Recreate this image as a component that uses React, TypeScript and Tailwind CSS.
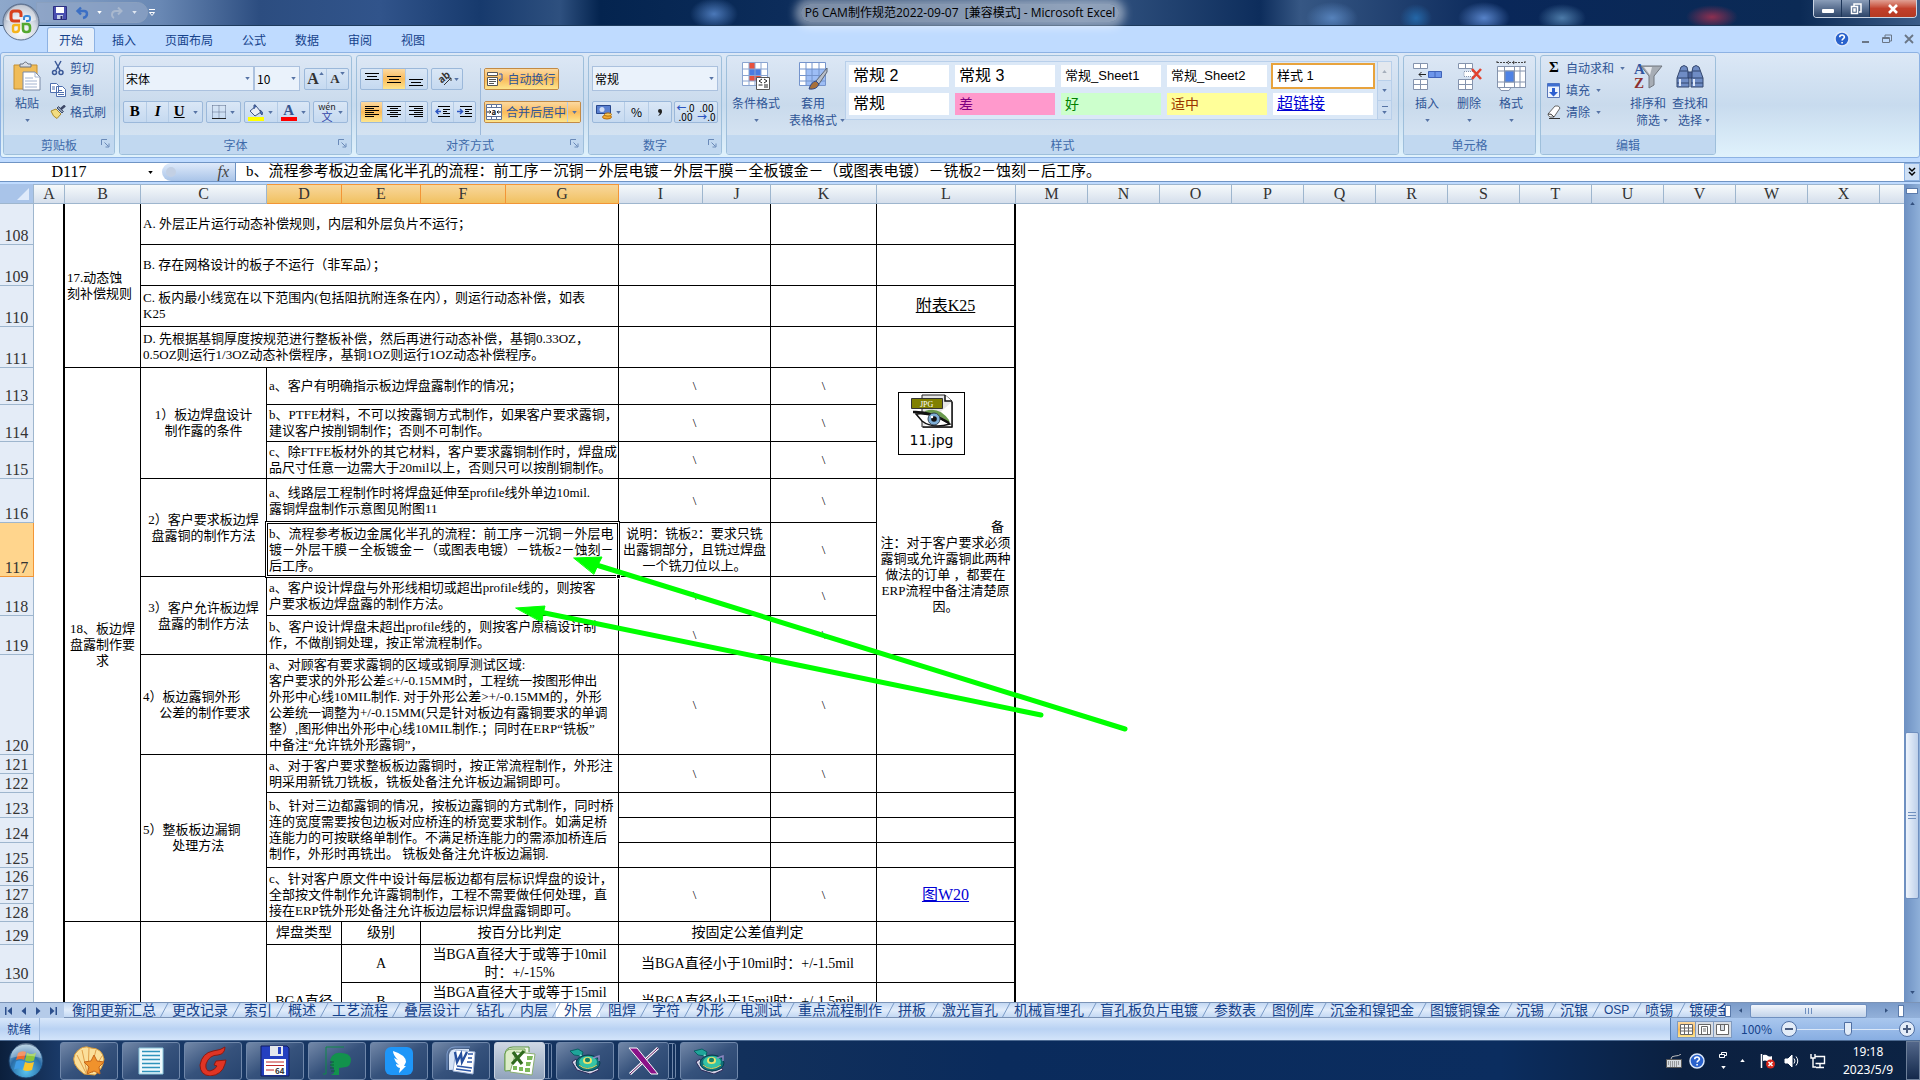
import React from "react";
import { clsx } from "clsx";

const sheetTabs = [
  "衡阳更新汇总", "更改记录", "索引", "概述", "工艺流程", "叠层设计", "钻孔", "内层", "外层",
  "阻焊", "字符", "外形", "电测试", "重点流程制作", "拼板", "激光盲孔", "机械盲埋孔",
  "盲孔板负片电镀", "参数表", "图例库", "沉金和镍钯金", "图镀铜镍金", "沉锡", "沉银", "OSP",
  "喷锡", "镀硬金",
];

const columns = [
  { name: "A", width: "w-[31px]" },
  { name: "B", width: "w-[76px]" },
  { name: "C", width: "w-[126px]" },
  { name: "D", width: "w-[75px]", active: true },
  { name: "E", width: "w-[79px]", active: true },
  { name: "F", width: "w-[85px]", active: true },
  { name: "G", width: "w-[113px]", active: true },
  { name: "I", width: "w-[84px]" },
  { name: "J", width: "w-[68px]" },
  { name: "K", width: "w-[106px]" },
  { name: "L", width: "w-[139px]" },
  ..."MNOPQRSTUVWX".split("").map((name) => ({ name, width: "w-[72px]", active: false })),
];

/* ---------- small parts ---------- */

const Caret = ({ className }: { className?: string }) => (
  <svg viewBox="0 0 6 4" className={clsx("h-[3px] w-[5px] shrink-0 fill-[#5673a5]", className)}>
    <path d="M0 0h6L3 4z" />
  </svg>
);

const Group = ({
  title,
  className,
  launcher = true,
  children,
}: {
  title: string;
  className?: string;
  launcher?: boolean;
  children: React.ReactNode;
}) => (
  <section
    className={clsx(
      "flex h-[100px] shrink-0 flex-col overflow-hidden rounded-[3px] border border-[#9ebfdb] bg-gradient-to-b from-[#dce7f5] via-[#c9daec] to-[#dbe8f5]",
      className
    )}
  >
    <div className="flex flex-1">{children}</div>
    <div className="relative flex h-[19px] items-center justify-center bg-[#c1d8f0] text-[#3e6aaa]">
      {title}
      {launcher && (
        <svg viewBox="0 0 9 9" className="absolute top-1 right-1 size-[9px] fill-none stroke-[#6a8ab8]">
          <path d="M.5 6V.5H6M3.5 3.5l4 4M8 4.5V8H4.5" />
        </svg>
      )}
    </div>
  </section>
);

const ButtonBox = ({ className, children }: { className?: string; children: React.ReactNode }) => (
  <div
    className={clsx(
      "flex h-[22px] items-stretch divide-x divide-[#b5cce6] overflow-hidden rounded-[2px] border border-[#9bb8da] bg-gradient-to-b from-[#dae7f6] to-[#c5d9f0]",
      className
    )}
  >
    {children}
  </div>
);

const Tool = ({
  label,
  className,
  on,
  children,
}: {
  label: string;
  className?: string;
  on?: boolean;
  children: React.ReactNode;
}) => (
  <button
    aria-label={label}
    className={clsx(
      "flex flex-1 items-center justify-center gap-1",
      on && "bg-gradient-to-b from-[#fcd9a0] via-[#f9bb5a] to-[#fde58c]",
      className
    )}
  >
    {children}
  </button>
);

const Lines = ({ d }: { d: string }) => (
  <svg viewBox="0 0 16 16" className="size-4 fill-none stroke-black" shapeRendering="crispEdges">
    <path d={d} />
  </svg>
);

const Combo = ({ label, value, className }: { label: string; value: string; className?: string }) => (
  <div className={clsx("relative h-[25px]", className)}>
    <select
      aria-label={label}
      className="h-full w-full appearance-none border border-[#abc1de] bg-[#eaf2fb] pl-0.5 text-xs text-black"
    >
      <option>{value}</option>
    </select>
    <Caret className="absolute top-[11px] right-1" />
  </div>
);

const BigButton = ({ lines, className, children }: { lines: string[]; className?: string; children: React.ReactNode }) => (
  <button className={clsx("flex flex-col items-center pt-1", className)}>
    <span className="mb-0.5 flex h-8 items-center">{children}</span>
    {lines.map((line, i) => (
      <span key={line} className="relative mt-px h-4 leading-4">
        {line}
        {lines.length > 1 && i === 1 && <Caret className="absolute top-[7px] -right-2" />}
      </span>
    ))}
    {lines.length === 1 && <Caret className="mt-2" />}
  </button>
);

const SmallButton = ({ label, caret, icon }: { label: string; caret?: boolean; icon: React.ReactNode }) => (
  <button className="flex h-[22px] items-center gap-1">
    <span className="flex w-4 justify-center">{icon}</span>
    {label}
    {caret && <Caret className="ml-0.5" />}
  </button>
);

/* ---------- title and ribbon ---------- */

const OfficeOrb = () => (
  <svg viewBox="0 0 38 38" className="absolute top-[3px] left-[2px] z-10 size-[38px]">
    <defs>
      <radialGradient id="orb" cx="50%" cy="75%" r="70%">
        <stop offset="0" stopColor="#fff" />
        <stop offset=".6" stopColor="#d3d9e3" />
        <stop offset="1" stopColor="#8391a8" />
      </radialGradient>
    </defs>
    <circle cx="19" cy="19" r="18" fill="url(#orb)" stroke="#5a6e8c" />
    <path d="M4 17a15 15 0 0 1 30 0Q19 22 4 17z" fill="#fff" opacity=".5" />
    <g fill="none">
      <path d="M18 18h-6q-3 0-3-3v-4q0-3 3-3h4q3 0 3 3v3" stroke="#d8401c" strokeWidth="3" />
      <path d="M22 17v-2q0-2 2-2h2q2 0 2 2v1q0 2-2 2h-2" stroke="#3a8bd8" strokeWidth="2" />
      <path d="M17 22v4q0 3-3 3h-1q-2 0-2-2v-3q0-2 2-2z" stroke="#f5b41c" strokeWidth="2.4" />
      <path d="M21 21h4q3 0 3 3v2q0 3-3 3h-1q-3 0-3-3z" stroke="#54a82e" strokeWidth="2.6" />
    </g>
  </svg>
);

const TitleBar = () => (
  <header className="relative flex h-[26px] shrink-0 items-start justify-between border-b border-[#1d3a5c] bg-[radial-gradient(ellipse_24px_16px_at_714px_14px,#4b78b8,transparent),radial-gradient(ellipse_26px_16px_at_1332px_18px,#5682bb,transparent),radial-gradient(ellipse_16px_14px_at_1416px_18px,#2467a8,transparent),radial-gradient(ellipse_26px_16px_at_1484px_18px,#5682c8,transparent),radial-gradient(ellipse_24px_14px_at_1562px_18px,#4c7aa8,transparent),radial-gradient(ellipse_26px_12px_at_1712px_17px,#8d2f50,transparent),linear-gradient(90deg,#8ea8cb_0,#6988b4_160px,#2c4d80_260px,#31548b_380px,#173a6d_480px,#2e507f_560px,#04244f_600px,#0c2c5a_780px,#365784_1080px,#0d2d5c_1260px,#365784_1300px,#092759_1500px,#0b2a55_1800px,#3b5c88)]">
    <div className="mt-0.5 ml-9 flex h-[21px] items-center rounded-r-full border border-[#8aa0bf] bg-[#94a9c8]/60 pr-2.5 pl-4">
      <button aria-label="保存">
        <svg viewBox="0 0 14 14" className="size-3.5">
          <path d="M.5.5h13v13h-13z" fill="#4a4fb0" stroke="#2c2f80" />
          <path d="M3 1h8v6H3z" fill="#fff" />
          <path d="M4 9h6v4H4z" fill="#c5d0e8" />
          <path d="M7.5 10h2v3h-2z" fill="#22246a" />
        </svg>
      </button>
      <button aria-label="撤消" className="ml-2 flex items-center gap-2">
        <svg viewBox="0 0 14 14" className="size-3.5 fill-none stroke-[#3c6fc4]" strokeWidth="2.4">
          <path d="M3 5h6q3 0 3 3 0 3-4 4M6 1.5L2.5 5 6 8.5" />
        </svg>
        <Caret className="fill-white" />
      </button>
      <button aria-label="恢复" className="ml-2 flex items-center gap-2">
        <svg viewBox="0 0 14 14" className="size-3.5 fill-none stroke-[#a9b8ce]" strokeWidth="2">
          <path d="M11 5H6Q2 5 2 9q0 2 2 3M8 1.5L11.5 5 8 8.5" />
        </svg>
        <Caret className="fill-[#dfe6f0]" />
      </button>
    </div>
    <svg viewBox="0 0 8 8" className="absolute top-[9px] left-[148px] size-2 fill-none stroke-white">
      <path d="M1 .5h6M1.500 3.500h5L4 6.500z" />
    </svg>
    <h1 className="absolute inset-x-0 top-1 mx-auto w-fit rounded-full bg-white/45 px-1 font-['Open_Sans','Noto_Sans_CJK_SC',sans-serif] text-xs leading-[18px] whitespace-pre text-black shadow-[0_0_8px_6px_rgba(255,255,255,0.45)]">
      {"P6 CAM制作规范2022-09-07  [兼容模式] - Microsoft Excel"}
    </h1>
    <div className="mr-[3px] flex h-[18px] divide-x divide-[#1d3558] overflow-hidden rounded-b-[4px] border border-t-0 border-[#c9d4e4]">
      <button aria-label="最小化" className="flex w-7 items-center justify-center bg-gradient-to-b from-[#8a9db9] to-[#2c4468]">
        <span className="mt-1 h-1 w-3 rounded-[1px] bg-white" />
      </button>
      <button aria-label="还原" className="flex w-7 items-center justify-center bg-gradient-to-b from-[#8a9db9] to-[#2c4468]">
        <svg viewBox="0 0 12 12" className="size-3 fill-none stroke-white" strokeWidth="1.5">
          <path d="M4 3V1h7v8H9M1.500 3.500h6v7h-6zM4 6h1v2H4z" />
        </svg>
      </button>
      <button aria-label="关闭" className="flex w-[46px] items-center justify-center bg-gradient-to-b from-[#e0a094] via-[#c2402c] to-[#b53a22]">
        <svg viewBox="0 0 12 10" className="h-2.5 w-3 fill-none stroke-white" strokeWidth="2.6">
          <path d="M2 1l8 8M10 1L2 9" />
        </svg>
      </button>
    </div>
  </header>
);

const HelpIcon = ({ className }: { className?: string }) => (
  <svg viewBox="0 0 16 16" className={className}>
    <circle cx="8" cy="8" r="7" fill="#2a62cc" stroke="#dce8fa" strokeWidth="1.5" />
    <path d="M5.700 6.300c0-3 4.800-3 4.700-.2C10.300 7.700 8.100 7.600 8.100 9.600M8.100 11v1.600" fill="none" stroke="#fff" strokeWidth="1.6" />
  </svg>
);

const RibbonTabs = () => (
  <nav className="flex h-[26px] shrink-0 items-end bg-[#bfdbff] pl-[47px] text-[#15428b]">
    <div className="flex flex-1 items-end gap-[5px]">
      {["开始", "插入", "页面布局", "公式", "数据", "审阅", "视图"].map((tab, i) => (
        <button
          key={tab}
          className={clsx(
            "h-[25px] px-3 text-xs",
            i === 0 && "rounded-t-[3px] border border-b-0 border-[#8db2e3] bg-[#e6effa] px-[11px]"
          )}
        >
          {tab}
        </button>
      ))}
    </div>
    <div className="flex h-full items-center gap-3 pr-1.5">
      <button aria-label="帮助"><HelpIcon className="size-4" /></button>
      <button aria-label="最小化窗口">
        <svg viewBox="0 0 8 10" className="h-2.5 w-2 stroke-[#6a7686]" strokeWidth="2">
          <path d="M0 8h7" />
        </svg>
      </button>
      <button aria-label="还原窗口">
        <svg viewBox="0 0 10 10" className="size-2.5 fill-none stroke-[#6a7686]">
          <path d="M3 3V1h6.500v6H8M.5 3.500H7.500v5H.5zM.5 4.500h7" />
        </svg>
      </button>
      <button aria-label="关闭窗口">
        <svg viewBox="0 0 10 10" className="size-2.5 fill-none stroke-[#6a7686]" strokeWidth="1.8">
          <path d="M1 1l8 8M9 1L1 9" />
        </svg>
      </button>
    </div>
  </nav>
);

const ClipboardGroup = () => (
  <Group title="剪贴板" className="w-[112px]">
    <BigButton lines={["粘贴"]} className="w-[46px]">
      <svg viewBox="0 0 28 30" className="h-[30px] w-7">
        <path d="M1 4h23v24H1z" fill="#f0bc58" stroke="#c58f30" />
        <path d="M7 6V3h3q2.500-4 5 0h3v3z" fill="#d9dde4" stroke="#6b7280" />
        <path d="M10 11h12l5 5v13H10z" fill="#fff" stroke="#7a8aa5" />
        <path d="M22 11v5h5M12 17h8M12 20h12M12 23h12M12 26h12" fill="none" stroke="#a3b4d0" />
      </svg>
    </BigButton>
    <div className="flex flex-col pt-px">
      <SmallButton
        label="剪切"
        icon={
          <svg viewBox="0 0 14 16" className="h-4 w-3.5 fill-none stroke-[#3b5998]" strokeWidth="1.5">
            <path d="M4 1l5 9M10 1L5 10" />
            <circle cx="3.5" cy="12.5" r="2" />
            <circle cx="10" cy="12.5" r="2" />
          </svg>
        }
      />
      <SmallButton
        label="复制"
        icon={
          <svg viewBox="0 0 16 14" className="h-3.5 w-4" fill="#fff" stroke="#4f6fae">
            <path d="M.5.5h6l2 2v7h-8zM6.500 3.500h6l3 3v7h-9z" />
            <path d="M2 4h3M2 6h3M8 7.500h4M8 9.500h6M8 11.500h6" />
          </svg>
        }
      />
      <SmallButton
        label="格式刷"
        icon={
          <svg viewBox="0 0 16 14" className="h-3.5 w-4">
            <path d="M1 6l5-2 5 5-4 4.500Q3 12 1 6z" fill="#f3dc80" stroke="#a88a30" />
            <path d="M7 3l5 5 1.500-1.500-5-5z" fill="#8d9bb4" stroke="#42506c" />
            <path d="M11 4l4-3.500" stroke="#3c4766" strokeWidth="2.5" />
          </svg>
        }
      />
    </div>
  </Group>
);

const FontGroup = () => (
  <Group title="字体" className="w-[233px]">
    <div className="flex flex-1 flex-col gap-2.5 px-[3px] pt-2.5">
      <div className="flex items-center">
        <Combo label="字体" value="宋体" className="w-[131px]" />
        <Combo label="字号" value="10" className="w-[46px]" />
        <ButtonBox className="ml-1 w-[45px]">
          <Tool label="增大字号"><b className="font-['Liberation_Serif',serif] text-base text-[#333]">A</b><Caret className="-ml-1 mb-2.5 rotate-180" /></Tool>
          <Tool label="减小字号"><b className="font-['Liberation_Serif',serif] text-[13px] text-[#333]">A</b><Caret className="-ml-1 mb-2.5" /></Tool>
        </ButtonBox>
      </div>
      <div className="flex gap-[3px] font-['Liberation_Serif',serif] text-black">
        <ButtonBox className="w-20">
          <Tool label="加粗"><b className="text-[15px]">B</b></Tool>
          <Tool label="倾斜"><b className="text-[15px] italic">I</b></Tool>
          <Tool label="下划线" className="flex-[1.5]"><b className="text-[15px] underline">U</b><Caret className="ml-1" /></Tool>
        </ButtonBox>
        <ButtonBox className="w-[35px]">
          <Tool label="边框">
            <svg viewBox="0 0 14 14" className="size-3.5 fill-none stroke-[#5b6b88]">
              <path d="M.5.5h13M.5.5v13M13.500.5v13M7 .5v13M.5 7h13" strokeDasharray="1 1" />
              <path d="M0 13.500h14" stroke="#222" />
            </svg>
            <Caret />
          </Tool>
        </ButtonBox>
        <ButtonBox className="w-[66px]">
          <Tool label="填充颜色">
            <svg viewBox="0 0 16 17" className="h-[17px] w-4">
              <path d="M2 7l6-5 5 6-6 4z" fill="#e9eef7" stroke="#3f5584" />
              <path d="M12 6q4 2 2 5-2-1-2-5zM6 5V1q2-1 2 2" fill="#4a74c4" stroke="#3f5584" />
              <path d="M0 13h16v4H0z" fill="#ff0" />
            </svg>
            <Caret />
          </Tool>
          <Tool label="字体颜色">
            <span className="flex flex-col items-center">
              <b className="text-[15px] leading-[13px] text-[#36558f]">A</b>
              <span className="h-1 w-4 bg-[#f00]" />
            </span>
            <Caret />
          </Tool>
        </ButtonBox>
        <ButtonBox className="w-[35px]">
          <Tool label="拼音指南">
            <span className="flex flex-col items-center font-['Noto_Sans_CJK_SC',sans-serif]">
              <span className="text-[9px] leading-[8px] text-[#222]">wén</span>
              <span className="text-[11px] leading-[11px] text-[#3346a8]">文</span>
            </span>
            <Caret className="-ml-0.5" />
          </Tool>
        </ButtonBox>
      </div>
    </div>
  </Group>
);

const AlignGroup = () => (
  <Group title="对齐方式" className="w-[228px]">
    <div className="flex flex-1 pt-3 pl-[3px]">
      <div className="flex flex-col gap-[11px] border-r border-[#9bb8da] pr-1">
        <div className="flex gap-[3px]">
          <ButtonBox className="w-[68px]">
            <Tool label="顶端对齐"><Lines d="M1 2.500h14M3 5.500h10M1 8.500h14" /></Tool>
            <Tool label="垂直居中" on><Lines d="M1 5.500h14M3 8.500h10M1 11.500h14" /></Tool>
            <Tool label="底端对齐"><Lines d="M1 8.500h14M3 11.500h10M1 14.500h14" /></Tool>
          </ButtonBox>
          <ButtonBox className="w-8">
            <Tool label="方向">
              <svg viewBox="0 0 18 18" className="size-[18px] overflow-visible fill-none stroke-[#333]">
                <text x="3" y="11" fontSize="10" fontWeight="bold" fill="#333" stroke="none" transform="rotate(-40 8 9)">ab</text>
                <path d="M8 15L15 8M15 11V8h-3" />
              </svg>
              <Caret className="-ml-1" />
            </Tool>
          </ButtonBox>
        </div>
        <div className="flex gap-[3px]">
          <ButtonBox className="w-[68px]">
            <Tool label="文本左对齐" on><Lines d="M1 2.500h14M1 4.500h9M1 6.500h14M1 8.500h9M1 10.500h14M1 12.500h9" /></Tool>
            <Tool label="居中"><Lines d="M1 2.500h14M4 4.500h8M1 6.500h14M4 8.500h8M1 10.500h14M4 12.500h8" /></Tool>
            <Tool label="文本右对齐"><Lines d="M1 2.500h14M6 4.500h9M1 6.500h14M6 8.500h9M1 10.500h14M6 12.500h9" /></Tool>
          </ButtonBox>
          <ButtonBox className="w-[45px]">
            <Tool label="减少缩进量">
              <svg viewBox="0 0 16 14" className="h-3.5 w-4 fill-none stroke-black">
                <path d="M3 1.500h12M8 4.500h7M8 6.500h4M8 8.500h7M3 11.500h12" />
                <path d="M6 6.500H1M3.500 4L1 6.500 3.500 9" stroke="#2c55c0" strokeWidth="1.5" />
              </svg>
            </Tool>
            <Tool label="增加缩进量">
              <svg viewBox="0 0 16 14" className="h-3.5 w-4 fill-none stroke-black">
                <path d="M3 1.500h12M8 4.500h7M8 6.500h4M8 8.500h7M3 11.500h12" />
                <path d="M0 6.500h5M3 4l2.500 2.500L3 9" stroke="#2c55c0" strokeWidth="1.5" />
              </svg>
            </Tool>
          </ButtonBox>
        </div>
      </div>
      <div className="flex flex-col gap-[11px] pl-[3px]">
        <ButtonBox className="w-[75px] border-[#c28a45]">
          <Tool label="自动换行" on>
            <svg viewBox="0 0 16 16" className="size-4" fill="#fff" stroke="#555">
              <path d="M.5 1.500h10v3H.5zM.5 6.500h10v8H.5zM2 8.500h7M2 10.500h7M2 12.500h5" />
              <path d="M12 3h3v6h-3M13.500 7.500L12 9l1.500 1.500" fill="none" stroke="#3658b0" />
            </svg>
            自动换行
          </Tool>
        </ButtonBox>
        <ButtonBox className="w-[97px] border-[#c28a45]">
          <Tool label="合并后居中" on className="flex-[7]">
            <svg viewBox="0 0 16 16" className="size-4" fill="#fff" stroke="#5f7299">
              <path d="M.5.5h5v3h-5zM5.500.5h5v3h-5zM10.500.5h5v3h-5zM.5 12.500h5v3h-5zM5.500 12.500h5v3h-5zM10.500 12.500h5v3h-5zM.5 3.500h15v9H.5z" />
              <path d="M1 8h4M3.500 6.500L5 8 3.500 9.500M15 8h-4M12.500 6.500L11 8l1.500 1.500" stroke="#222" />
              <text x="5.5" y="10.5" fontSize="8" fontWeight="bold" fill="#222" stroke="none">a</text>
            </svg>
            合并后居中
          </Tool>
          <Tool label="合并选项" on><Caret /></Tool>
        </ButtonBox>
      </div>
    </div>
  </Group>
);

const NumberGroup = () => (
  <Group title="数字" className="w-[134px]">
    <div className="flex flex-1 flex-col gap-2.5 px-[3px] pt-2.5">
      <Combo label="数字格式" value="常规" className="w-full" />
      <div className="flex justify-between text-black">
        <ButtonBox className="w-20">
          <Tool label="会计数字格式" className="flex-[1.4]">
            <svg viewBox="0 0 16 16" className="size-4">
              <path d="M.5 1.500h14v8H.5z" fill="#5a80d0" stroke="#28478c" />
              <circle cx="6" cy="5.5" r="2.5" fill="#cfdcf5" />
              <ellipse cx="11" cy="13" rx="4.5" ry="2" fill="#f0a830" stroke="#b06c10" />
              <ellipse cx="12" cy="10.5" rx="3.5" ry="1.6" fill="#f8cc58" stroke="#b06c10" />
            </svg>
            <Caret />
          </Tool>
          <Tool label="百分比样式">%</Tool>
          <Tool label="千位分隔样式">
            <svg viewBox="0 0 6 10" className="h-2.5 w-1.5 fill-[#222]">
              <circle cx="3" cy="4" r="2" />
              <path d="M5 4q0 4-4 5 2-2 2-4z" />
            </svg>
          </Tool>
        </ButtonBox>
        <ButtonBox className="w-11 divide-x-0 text-right text-[10px] leading-[9px]">
          <Tool label="增加小数位数">
            <span><b className="text-[#2c55c0]">←</b>.0<br />.00</span>
          </Tool>
          <Tool label="减少小数位数">
            <span>.00<br /><b className="text-[#2c55c0]">→</b>.0</span>
          </Tool>
        </ButtonBox>
      </div>
    </div>
  </Group>
);

const styleItems = [
  { name: "常规 2", look: "bg-white text-base" },
  { name: "常规 3", look: "bg-white text-base" },
  { name: "常规_Sheet1", look: "bg-white text-[13px]" },
  { name: "常规_Sheet2", look: "bg-white text-[13px]" },
  { name: "样式 1", look: "bg-white text-[13px] outline-2 outline-[#e8a33d]" },
  { name: "常规", look: "bg-white text-base" },
  { name: "差", look: "bg-[#ff99cc] text-[#800080] text-sm" },
  { name: "好", look: "bg-[#ccffcc] text-[#008000] text-sm" },
  { name: "适中", look: "bg-[#ffff99] text-[#993300] text-sm" },
  { name: "超链接", look: "bg-white text-[#0000d4] text-base underline" },
];

const StylesGroup = () => (
  <Group title="样式" launcher={false} className="w-[673px]">
    <BigButton lines={["条件格式"]} className="w-[58px]">
      <svg viewBox="0 0 30 30" className="size-[30px]">
        <path d="M1.500 1.500h25v23h-25z" fill="#fff" />
        <path d="M8 1h6v7H8zM8 15h12v5H8z" fill="#e8513c" />
        <path d="M8 8h12v7H8z" fill="#4a7be0" />
        <path d="M1.500 1.500h25v23h-25zM1.500 8h25M1.500 14.500h25M1.500 20h25M8 1.500v23M14 1.500v23M20 1.500v23" fill="none" stroke="#8aa4d0" />
        <path d="M15.500 16.500h13v12h-13z" fill="#fff" stroke="#555" />
        <path d="M21 18l-3 2 3 2M17.500 24h4M23 18l3 2-3 2M23 24h4M23 26h4" fill="none" stroke="#222" />
      </svg>
    </BigButton>
    <BigButton lines={["套用", "表格格式"]} className="w-14">
      <svg viewBox="0 0 30 30" className="size-[30px]">
        <path d="M1.500 1.500h26v23h-26z" fill="#fff" />
        <path d="M8 8h19v16H8z" fill="#9dbdf5" />
        <path d="M1.500 1.500h26v23h-26zM1.500 8h26M1.500 14.500h26M1.500 20h26M8 1.500v23M14 1.500v23M21 1.500v23" fill="none" stroke="#7594cc" />
        <path d="M29 7L18 20l3 3 8-12z" fill="#b9bfc9" stroke="#5b6472" />
        <path d="M18 20q-5 1-7 8 8 1 10-5z" fill="#a8703a" stroke="#2d4a8c" />
      </svg>
    </BigButton>
    <div className="mt-[5px] ml-1 flex h-[59px] border border-[#b8cfea] bg-[#dbe8f7]">
      <div className="grid grid-cols-[repeat(5,100px)] grid-rows-[repeat(2,22px)] gap-x-1.5 gap-y-1.5 px-[3px] pt-[3px] font-['Liberation_Sans','Noto_Sans_CJK_SC',sans-serif] text-black">
        {styleItems.map((s) => (
          <button key={s.name} className={clsx("px-1 text-left leading-5", s.look)}>
            {s.name}
          </button>
        ))}
      </div>
      <div className="ml-px flex w-[14px] flex-col divide-y divide-[#b8cfea] border-l border-[#b8cfea] bg-[#cfdff2]">
        <Tool label="上一行" className="bg-[#e4e8ee]"><Caret className="rotate-180 fill-[#a5aebb]" /></Tool>
        <Tool label="下一行"><Caret /></Tool>
        <Tool label="其他样式" className="flex-col">
          <span className="h-px w-1.5 bg-[#5673a5]" />
          <Caret />
        </Tool>
      </div>
    </div>
  </Group>
);

const CellsGroup = () => (
  <Group title="单元格" launcher={false} className="w-[133px]">
    <div className="flex flex-1 pl-0.5">
      <BigButton lines={["插入"]} className="w-[42px]">
        <svg viewBox="0 0 30 28" className="h-7 w-[30px]" fill="#fff" stroke="#8493ad">
          <path d="M1.500 1.500h14v5h-14zM8.500 1.500v5M1.500 17.500h14v10h-14zM8.500 17.500v10M1.500 22.500h14" />
          <path d="M16.500 9.500h13v6h-13zM23 9.500v6" fill="#6c95ea" stroke="#3f62b8" />
          <path d="M14 12.500H7M9.500 10L7 12.500 9.500 15" fill="none" stroke="#222" />
        </svg>
      </BigButton>
      <BigButton lines={["删除"]} className="w-[42px]">
        <svg viewBox="0 0 28 28" className="size-7" fill="#fff" stroke="#8493ad">
          <path d="M3.500 1.500h14v5h-14zM10.500 1.500v5M3.500 17.500h14v10h-14zM10.500 17.500v10M3.500 22.500h14" />
          <path d="M9 9.500h10v5H9z" strokeDasharray="1 1" />
          <path d="M17 7l9 10M26 7l-9 10" stroke="#e2432f" strokeWidth="2.6" />
        </svg>
      </BigButton>
      <BigButton lines={["格式"]} className="w-[42px]">
        <svg viewBox="0 0 30 32" className="h-8 w-[30px]" fill="#fff" stroke="#8493ad">
          <path d="M1.500 6.500h28v21h-28zM1.500 11h28M1.500 22h28M8.500 6.500v21M18.500 6.500v21M24 6.500v21" />
          <path d="M9 11h9v11H9z" fill="#4d82e6" />
          <path d="M1 2.500h28M1 1v3M29 1v3M13 1l-2 1.500 2 1.500M17 1l2 1.500-2 1.500" fill="none" stroke="#444" strokeDasharray="2 1" />
          <path d="M3 27.500l2 3h8l2-3z" />
        </svg>
      </BigButton>
    </div>
  </Group>
);

const EditGroup = () => (
  <Group title="编辑" launcher={false} className="w-44">
    <div className="flex w-[86px] flex-col pt-px pl-[5px]">
      <SmallButton label="自动求和" caret icon={<b className="font-['Liberation_Serif',serif] text-[15px] text-black">Σ</b>} />
      <SmallButton
        label="填充"
        caret
        icon={
          <svg viewBox="0 0 14 15" className="h-[15px] w-3.5">
            <path d="M.5.5h12v14H.5z" fill="#eef4fd" stroke="#5b78b8" />
            <path d="M.5.5h12v3H.5z" fill="#3f6fd0" />
            <path d="M5 5h3v4h3l-4.500 4.500L2 9h3z" fill="#2d5fd0" />
          </svg>
        }
      />
      <SmallButton
        label="清除"
        caret
        icon={
          <svg viewBox="0 0 15 14" className="h-3.5 w-[15px]">
            <path d="M1 9l7-8q4-1 5 2l-6 9H3q-2-1-2-3z" fill="#fff" stroke="#666" />
            <path d="M1 9q3-1 6 3M2 13.500h11" fill="none" stroke="#333" />
          </svg>
        }
      />
    </div>
    <BigButton lines={["排序和", "筛选"]} className="w-[42px]">
      <svg viewBox="0 0 30 32" className="h-8 w-[30px]">
        <text x="1" y="14" fontSize="15" fontWeight="bold" fill="#31569e" fontFamily="Liberation Serif">A</text>
        <text x="1" y="28" fontSize="15" fontWeight="bold" fill="#8c2f2f" fontFamily="Liberation Serif">Z</text>
        <path d="M8 6h21l-8 10v9l-5 3V16z" fill="#a7adb5" stroke="#70767e" />
        <path d="M11 7h8l-2 8z" fill="#e3e6ea" />
      </svg>
    </BigButton>
    <BigButton lines={["查找和", "选择"]} className="w-[42px]">
      <svg viewBox="0 0 28 28" className="size-7" stroke="#33466e">
        <path d="M5 5q3-3 6 0l2 9v11H1V16zM17 5q3-3 6 0l4 11v9H15V14z" fill="#6f8cc4" />
        <path d="M12 10h4v6h-4z" fill="#4b639a" />
        <path d="M1 21h12M15 21h12M4 9h8M16 9h8M1 16h12M15 16h12" fill="none" />
        <path d="M4 17v7M18 17v7" stroke="#dfe9fa" strokeWidth="2" />
      </svg>
    </BigButton>
  </Group>
);

const Ribbon = () => (
  <div className="flex h-[106px] shrink-0 gap-1 overflow-hidden rounded-[3px] border border-[#8db2e3] bg-gradient-to-b from-[#dce8f6] via-[#c8dbee] to-[#e0f2fc] pt-0.5 pl-0.5 text-xs text-[#2f5596]">
    <ClipboardGroup />
    <FontGroup />
    <AlignGroup />
    <NumberGroup />
    <StylesGroup />
    <CellsGroup />
    <EditGroup />
  </div>
);

const FormulaBar = () => (
  <div className="mt-1 mb-0.5 flex h-5 shrink-0 border-y border-[#6f94c4] bg-white font-['Liberation_Serif','Noto_Sans_CJK_SC',serif] text-black">
    <input aria-label="名称框" defaultValue="D117" className="w-[138px] text-center text-base leading-4 outline-none" />
    <button aria-label="名称列表" className="flex w-6 items-center justify-center">
      <Caret className="h-1 w-[7px] fill-black" />
    </button>
    <div className="flex w-[74px] items-center justify-between rounded-l-full border-r border-[#6f94c4] bg-gradient-to-b from-[#dfeafa] to-[#a9c4e8] pr-1.5 pl-1">
      <span className="size-2.5 rounded-full bg-[#c3d0e4]" />
      <button className="text-base leading-4 text-[#444] italic">fx</button>
    </div>
    <input
      aria-label="编辑栏"
      defaultValue="b、流程参考板边金属化半孔的流程：前工序－沉铜－外层电镀－外层干膜－全板镀金－（或图表电镀）－铣板2－蚀刻－后工序。"
      className="min-w-0 flex-1 pl-2.5 text-[15px] outline-none"
    />
    <button aria-label="展开编辑栏" className="flex w-4 items-center justify-center border border-[#8db2e3] bg-[#cfe0f5]">
      <svg viewBox="0 0 8 10" className="h-2.5 w-2 fill-none stroke-black" strokeWidth="1.5">
        <path d="M1 1l3 3 3-3M1 5l3 3 3-3" />
      </svg>
    </button>
  </div>
);

/* ---------- worksheet ---------- */

type CellProps = {
  text?: string;
  cols?: number;
  rows?: number;
  left?: boolean;
  big?: boolean;
  last?: boolean;
  selected?: boolean;
  children?: React.ReactNode;
};

const Cell = ({ text, cols, rows, left, big, last, selected, children }: CellProps) => (
  <td
    colSpan={cols}
    rowSpan={rows}
    className={clsx(
      "relative border-b border-black p-0 align-middle whitespace-pre",
      last ? "border-r-2" : "border-r",
      left ? "pl-0.5 text-left" : "text-center",
      big ? "text-sm leading-[18px]" : "text-[13px] leading-4"
    )}
  >
    {text}
    {children}
    {selected && (
      <>
        <span className="absolute -inset-0.5 z-10 border border-black inset-shadow-[0_0_0_1px_white,0_0_0_2px_black]" />
        <span className="absolute -right-[3px] -bottom-[3px] z-10 size-[5px] border border-white bg-black" />
      </>
    )}
  </td>
);

const Row = ({ n, height, active, children }: { n?: number; height: string; active?: boolean; children?: React.ReactNode }) => (
  <tr className={height}>
    <th
      className={clsx(
        "border-r border-b p-0 text-center align-bottom text-base leading-4 font-normal text-[#333]",
        active ? "border-[#f29536] bg-[#ffd58d]" : "border-[#9eb6ce] bg-[#e4ecf7]"
      )}
    >
      {n}
    </th>
    <td className="border-r-2 border-black p-0" />
    {children}
  </tr>
);

const JpgObject = () => (
  <div className="absolute top-6 left-[21px] flex h-[63px] w-[67px] flex-col items-center border border-black bg-white pt-px font-['DejaVu_Sans',sans-serif] text-sm">
    <svg viewBox="0 0 42 34" className="h-[34px] w-[42px]">
      <path d="M11 1h23l7 6v26H11z" fill="#e6e6e6" stroke="#222" />
      <path d="M34 1v6h7M41 8v25H12" fill="#fff" stroke="#111" strokeWidth="1.5" />
      <path d="M.5 4.500h31v10H.5z" fill="#808000" stroke="#333" />
      <text x="9" y="12.5" fontSize="8" fill="#fff" fontFamily="Liberation Serif">JPG</text>
      <path d="M14 17q14-5 24 9l1 5q-9-12-24-11z" fill="#6a9a4e" />
      <path d="M5 20q16-2 34 10-18 5-28-3z" fill="#fff" stroke="#111" strokeWidth="1.5" />
      <path d="M2 18q18-1 36 11" fill="none" stroke="#111" strokeWidth="2.5" />
      <circle cx="23" cy="25" r="6" fill="#7eaed6" stroke="#345" />
      <circle cx="23" cy="25" r="2.8" fill="#111" />
      <circle cx="21" cy="23" r="1.2" fill="#fff" />
    </svg>
    <span className="leading-6">11.jpg</span>
  </div>
);

const Slashes = ({ rows }: { rows?: number }) => (
  <>
    <Cell text="\" cols={2} rows={rows} />
    <Cell text="\" rows={rows} />
  </>
);

const Blanks = ({ last = true }: { last?: boolean }) => (
  <>
    <Cell cols={2} />
    <Cell />
    {last && <Cell last />}
  </>
);

const Sheet = () => (
  <table className="w-full table-fixed border-separate border-spacing-0 bg-white font-['Liberation_Serif','Noto_Sans_CJK_SC',serif] text-black">
    <colgroup>
      <col className="w-[34px]" />
      {columns.map((c) => (
        <col key={c.name} className={c.width} />
      ))}
      <col />
    </colgroup>
    <thead>
      <tr className="h-5 text-base leading-[18px] text-[#333]">
        <th aria-label="全选" className="border-r border-b border-[#9eb6ce] bg-[#a9c4e9] p-0">
          <svg viewBox="0 0 12 12" className="mr-1 ml-auto size-3 fill-[#dfeafa]">
            <path d="M12 0v12H0z" />
          </svg>
        </th>
        {columns.map((c) => (
          <th
            key={c.name}
            className={clsx(
              "border-t border-r border-b p-0 font-normal",
              c.active
                ? "border-[#f29536] bg-gradient-to-b from-[#f8d79b] to-[#f1c15f]"
                : "border-[#9eb6ce] bg-gradient-to-b from-[#f6fafb] to-[#d5dfec]"
            )}
          >
            {c.name}
          </th>
        ))}
        <th className="border-t border-b border-[#9eb6ce] bg-gradient-to-b from-[#f6fafb] to-[#d5dfec] p-0" />
      </tr>
    </thead>
    <tbody>
      <Row n={108} height="h-[41px]">
        <Cell rows={4} left text={"17.动态蚀\n刻补偿规则"} />
        <Cell cols={5} left text="A. 外层正片运行动态补偿规则，内层和外层负片不运行；" />
        <Blanks />
      </Row>
      <Row n={109} height="h-[41px]">
        <Cell cols={5} left text="B. 存在网格设计的板子不运行（非军品）；" />
        <Blanks />
      </Row>
      <Row n={110} height="h-[41px]">
        <Cell cols={5} left text={"C. 板内最小线宽在以下范围内(包括阻抗附连条在内），则运行动态补偿，如表\nK25"} />
        <Blanks last={false} />
        <Cell last>
          <a href="#k25" className="text-base underline">附表K25</a>
        </Cell>
      </Row>
      <Row n={111} height="h-[41px]">
        <Cell cols={5} left text={"D. 先根据基铜厚度按规范进行整板补偿，然后再进行动态补偿，基铜0.33OZ，\n0.5OZ则运行1/3OZ动态补偿程序，基铜1OZ则运行1OZ动态补偿程序。"} />
        <Blanks />
      </Row>
      <Row n={113} height="h-[37px]">
        <Cell rows={16} text={"18、板边焊\n盘露制作要\n求"} />
        <Cell rows={3} text={"1）板边焊盘设计\n制作露的条件"} />
        <Cell cols={4} left text="a、客户有明确指示板边焊盘露制作的情况；" />
        <Slashes />
        <Cell rows={3} last>
          <JpgObject />
        </Cell>
      </Row>
      <Row n={114} height="h-[37px]">
        <Cell cols={4} left text={"b、PTFE材料，不可以按露铜方式制作，如果客户要求露铜，\n建议客户按削铜制作；否则不可制作。"} />
        <Slashes />
      </Row>
      <Row n={115} height="h-[37px]">
        <Cell cols={4} left text={"c、除FTFE板材外的其它材料，客户要求露铜制作时，焊盘成\n品尺寸任意一边需大于20mil以上，否则只可以按削铜制作。"} />
        <Slashes />
      </Row>
      <Row n={116} height="h-11">
        <Cell rows={2} text={"2）客户要求板边焊\n盘露铜的制作方法"} />
        <Cell cols={4} left text={"a、线路层工程制作时将焊盘延伸至profile线外单边10mil.\n露铜焊盘制作示意图见附图11"} />
        <Slashes />
        <Cell rows={4} last text={"　　　　　　　　备\n注：对于客户要求必须\n露铜或允许露铜此两种\n做法的订单 ，都要在\nERP流程中备注清楚原\n因。"} />
      </Row>
      <Row n={117} height="h-[54px]" active>
        <Cell cols={4} left selected text={"b、流程参考板边金属化半孔的流程：前工序－沉铜－外层电\n镀－外层干膜－全板镀金－（或图表电镀）－铣板2－蚀刻－\n后工序。"} />
        <Cell cols={2} text={"说明：铣板2：要求只铣\n出露铜部分，且铣过焊盘\n一个铣刀位以上。"} />
        <Cell text="\" />
      </Row>
      <Row n={118} height="h-[39px]">
        <Cell rows={2} text={"3）客户允许板边焊\n盘露的制作方法"} />
        <Cell cols={4} left text={"a、客户设计焊盘与外形线相切或超出profile线的，则按客\n户要求板边焊盘露的制作方法。"} />
        <Slashes />
      </Row>
      <Row n={119} height="h-[39px]">
        <Cell cols={4} left text={"b、客户设计焊盘未超出profile线的，则按客户原稿设计制\n作，不做削铜处理，按正常流程制作。"} />
        <Slashes />
      </Row>
      <Row n={120} height="h-[100px]">
        <Cell left text={"4）板边露铜外形\n　 公差的制作要求"} />
        <Cell
          cols={4}
          left
          text={"a、对顾客有要求露铜的区域或铜厚测试区域:\n客户要求的外形公差≤+/-0.15MM时，工程统一按图形伸出\n外形中心线10MIL制作. 对于外形公差>+/-0.15MM的，外形\n公差统一调整为+/-0.15MM(只是针对板边有露铜要求的单调\n整）,图形伸出外形中心线10MIL制作.；同时在ERP“铣板”\n中备注“允许铣外形露铜”，"}
        />
        <Slashes />
        <Cell last />
      </Row>
      <Row n={121} height="h-[19px]">
        <Cell rows={8} left text={"5）整板板边漏铜\n　　 处理方法"} />
        <Cell cols={4} rows={2} left text={"a、对于客户要求整板板边露铜时，按正常流程制作，外形注\n明采用新铣刀铣板，铣板处备注允许板边漏铜即可。"} />
        <Slashes rows={2} />
        <Cell rows={2} last />
      </Row>
      <Row n={122} height="h-[19px]" />
      <Row n={123} height="h-[25px]">
        <Cell
          cols={4}
          rows={3}
          left
          text={"b、针对三边都露铜的情况，按板边露铜的方式制作，同时桥\n连的宽度需要按包边板对应桥连的桥宽要求制作。如满足桥\n连能力的可按联络单制作。不满足桥连能力的需添加桥连后\n制作，外形时再铣出。 铣板处备注允许板边漏铜."}
        />
        <Blanks />
      </Row>
      <Row n={124} height="h-[25px]">
        <Blanks />
      </Row>
      <Row n={125} height="h-[25px]">
        <Blanks />
      </Row>
      <Row n={126} height="h-[18px]">
        <Cell
          cols={4}
          rows={3}
          left
          text={"c、针对客户原文件中设计每层板边都有层标识焊盘的设计，\n全部按文件制作允许露铜制作，工程不需要做任何处理，直\n接在ERP铣外形处备注允许板边层标识焊盘露铜即可。"}
        />
        <Slashes rows={3} />
        <Cell rows={3} last>
          <a href="#w20" className="text-base text-[#0000d4] underline">图W20</a>
        </Cell>
      </Row>
      <Row n={127} height="h-[18px]" />
      <Row n={128} height="h-[18px]" />
      <Row n={129} height="h-[23px]">
        <Cell rows={4} />
        <Cell rows={4} />
        <Cell big text="焊盘类型" />
        <Cell big text="级别" />
        <Cell big cols={2} text="按百分比判定" />
        <Cell big cols={3} text="按固定公差值判定" />
        <Cell last />
      </Row>
      <Row n={130} height="h-[38px]">
        <Cell big rows={3} text="BGA直径" />
        <Cell big text="A" />
        <Cell big cols={2} text={"当BGA直径大于或等于10mil\n时：+/-15%"} />
        <Cell big cols={3} text="当BGA直径小于10mil时：+/-1.5mil" />
        <Cell last />
      </Row>
      <Row height="h-[38px]">
        <Cell big text="B" />
        <Cell big cols={2} text={"当BGA直径大于或等于15mil\n时：+/-10%"} />
        <Cell big cols={3} text="当BGA直径小于15mil时：+/-1.5mil" />
        <Cell last />
      </Row>
      <Row height="h-[38px]" />
    </tbody>
  </table>
);

// Hand-drawn pointers that float above the cells.
const Pointers = () => (
  <svg className="pointer-events-none absolute top-0 left-0 z-20 h-full w-full">
    <g transform="translate(0 -184)" stroke="#00ff00" fill="#00ff00" strokeLinecap="round">
      <path d="M590 563L1125 729M535 611L1041 715" strokeWidth="5" />
      <path d="M574 558l28-1-4 8-4 9zM516 608l29-2-2 8-1 8z" strokeWidth="1" />
    </g>
  </svg>
);

const VerticalScroll = () => (
  <div className="relative flex w-4 shrink-0 flex-col items-center bg-gradient-to-r from-[#6d90c2] to-[#8fb0d9]">
    <div className="mt-1 h-1.5 w-3 border border-[#5b7bab] bg-white" />
    <Caret className="mt-2 h-1 w-[7px] rotate-180 fill-[#33507e]" />
    <div className="flex-[528]" />
    <div className="flex w-3.5 flex-[166] flex-col items-center justify-center gap-0.5 rounded-[2px] border border-[#6f8fbf] bg-gradient-to-r from-[#eef4fc] to-[#bed0ea]">
      <span className="h-px w-2 bg-[#6f8fbf]" />
      <span className="h-px w-2 bg-[#6f8fbf]" />
      <span className="h-px w-2 bg-[#6f8fbf]" />
    </div>
    <div className="flex-[92]" />
    <Caret className="mb-2 h-1 w-[7px] fill-[#33507e]" />
  </div>
);

const NavArrow = ({ label, d }: { label: string; d: string }) => (
  <button aria-label={label}>
    <svg viewBox="0 0 8 8" className="size-2 fill-[#2c4f8c]">
      <path d={d} />
    </svg>
  </button>
);

const SheetTabs = () => (
  <div className="flex h-4 shrink-0 border-t border-[#7b93b6] bg-[#b5cbe9]">
    <div className="flex w-16 shrink-0 items-center justify-around pr-1 pl-0.5">
      <NavArrow label="第一张" d="M0 0h1.500v8H0zM7 0v8L2.500 4z" />
      <NavArrow label="上一张" d="M6 0v8L1.500 4z" />
      <NavArrow label="下一张" d="M2 0v8l4.500-4z" />
      <NavArrow label="最后一张" d="M1 0v8l4.500-4zM6.500 0H8v8H6.500z" />
    </div>
    <div className="flex min-w-0 flex-1 overflow-hidden border-b border-[#7b93b6] font-['Liberation_Sans','Noto_Sans_CJK_SC',sans-serif] text-sm leading-[14px] whitespace-nowrap text-[#15428b]">
      {sheetTabs.map((tab) => (
        <button
          key={tab}
          className={clsx(
            "relative shrink-0 px-2",
            tab === "外层" ? "bg-white" : "bg-gradient-to-b from-[#c3d8f3] via-[#e2edfb] to-[#c3d8f3]",
            tab === "OSP" && "text-xs leading-[14px]"
          )}
        >
          {tab}
          <svg viewBox="0 0 10 15" className="absolute top-0 -right-[5px] z-10 h-[15px] w-2.5 fill-none stroke-[#7b9cc8]">
            <path d="M1 15L9 0" />
          </svg>
        </button>
      ))}
    </div>
    <div className="flex w-[195px] shrink-0 items-center bg-gradient-to-b from-[#7b9bc9] to-[#93b1da] pr-4">
      <span className="h-3 w-1.5 border border-[#5b7bab] bg-white" />
      <Caret className="mx-1.5 h-1 w-[7px] rotate-90 fill-[#33507e]" />
      <div className="flex h-3.5 w-[117px] items-center justify-center gap-0.5 rounded-[2px] border border-[#6f8fbf] bg-gradient-to-b from-[#f2f6fc] to-[#c2d3ea]">
        <span className="h-1.5 w-px bg-[#6f8fbf]" />
        <span className="h-1.5 w-px bg-[#6f8fbf]" />
        <span className="h-1.5 w-px bg-[#6f8fbf]" />
      </div>
      <Caret className="ml-4 h-1 w-[7px] -rotate-90 fill-[#33507e]" />
      <span className="ml-auto h-3 w-1.5 shrink-0 border border-[#5b7bab] bg-white" />
    </div>
  </div>
);

const StatusBar = () => (
  <footer className="flex h-[22px] shrink-0 items-center bg-gradient-to-b from-[#d8e7fa] via-[#b9d2f3] to-[#d3e4fa] text-xs text-[#15428b]">
    <span className="h-full w-10 border-r border-[#9db9de] pl-[7px] leading-[21px]">就绪</span>
    <div className="ml-auto flex h-full items-center border-l border-[#567db0] bg-gradient-to-b from-[#a9c7ee] to-[#88aee2] pr-[5px] pl-1.5">
      <div className="flex h-[17px] w-[55px] divide-x divide-[#7f9ac0] border border-[#7f9ac0] bg-[#d7dce3]">
        <Tool label="普通" on>
          <svg viewBox="0 0 13 11" className="h-[11px] w-[13px] fill-white stroke-[#666]">
            <path d="M.5.500h12v10H.5zM.5 4h12M.5 7h12M4.500.5v10M8.500.5v10" />
          </svg>
        </Tool>
        <Tool label="页面布局视图">
          <svg viewBox="0 0 13 11" className="h-[11px] w-[13px] fill-white stroke-[#666]">
            <path d="M.5.500h12v10H.5zM3.500 2.500h6v8h-6zM5 5h3M5 7h3" />
          </svg>
        </Tool>
        <Tool label="分页预览">
          <svg viewBox="0 0 13 11" className="h-[11px] w-[13px] fill-white stroke-[#666]">
            <path d="M.5.500h12v10H.5zM4.500.5v6h4v-6" />
          </svg>
        </Tool>
      </div>
      <button className="mx-2 w-[33px]">100%</button>
      <button aria-label="缩小" className="flex size-4 items-center justify-center rounded-full border border-[#4f6fa3] bg-[#e3ecf8]">
        <span className="h-0.5 w-2 bg-[#4a5d80]" />
      </button>
      <input
        type="range"
        aria-label="显示比例"
        defaultValue={50}
        className="h-4 w-[102px] appearance-none bg-[linear-gradient(#dbe8f8,#dbe8f8)] bg-[length:100%_1px] bg-center bg-no-repeat [&::-webkit-slider-thumb]:h-3.5 [&::-webkit-slider-thumb]:w-2 [&::-webkit-slider-thumb]:appearance-none [&::-webkit-slider-thumb]:rounded-b-full [&::-webkit-slider-thumb]:border [&::-webkit-slider-thumb]:border-[#4f6fa3] [&::-webkit-slider-thumb]:bg-[#e3ecf8]"
      />
      <button aria-label="放大" className="flex size-4 items-center justify-center rounded-full border border-[#4f6fa3] bg-[#e3ecf8]">
        <svg viewBox="0 0 8 8" className="size-2 stroke-[#4a5d80]" strokeWidth="2">
          <path d="M0 4h8M4 0v8" />
        </svg>
      </button>
    </div>
  </footer>
);

/* ---------- taskbar ---------- */

const DriveEye = () => (
  <svg viewBox="0 0 32 26" className="h-[26px] w-8">
    <path d="M1 3l4 4 8 1 1-4-5-3z" fill="#1fa59a" stroke="#0b5f64" />
    <path d="M11 7l4 4" stroke="#8fe0d4" strokeWidth="2" />
    <path d="M3 14l4-3 4 8 8 4 10-3 1 2-9 4-13-4z" fill="#d6d2e6" stroke="#2b2b5a" />
    <ellipse cx="19" cy="15" rx="12" ry="8" fill="#0f6f78" stroke="#0a3c50" />
    <ellipse cx="19" cy="14" rx="9" ry="6" fill="#35c4a6" />
    <ellipse cx="18.500" cy="12.500" rx="4.500" ry="3.500" fill="#f0e36a" />
    <ellipse cx="18.500" cy="12" rx="2.600" ry="2.200" fill="#12806b" />
    <path d="M10 17q8 7 18 0" stroke="#e8d85a" fill="none" />
    <path d="M24 10l6-2v5" stroke="#8c86c0" strokeWidth="1.500" fill="none" />
  </svg>
);

const taskIcons: { label: string; icon: React.ReactNode; active?: boolean; stacked?: boolean }[] = [
  {
    label: "贝壳",
    icon: (
      <svg viewBox="0 0 32 30" className="h-[30px] w-8">
        <path d="M11 28Q-3 18 2 8 9-2 18 2q11 0 13 11-1 10-9 16z" fill="#fbdf9a" stroke="#d79a3a" />
        <path d="M13 27L4 9M14 27L9 4M15 27L16 2M17 27L23 4M19 27l10-17" stroke="#e0a04a" />
        <path d="M21 9l3 6 7 1-5 5 1 7-6-3-7 3 2-7-5-5 7-1z" fill="#f0922c" stroke="#c5661a" />
      </svg>
    ),
  },
  {
    label: "文档",
    icon: (
      <svg viewBox="0 0 26 28" className="h-7 w-[26px]">
        <path d="M1 1h24v26H1z" fill="#eef9fd" stroke="#8cc8dd" />
        <path d="M4 4.500h18M4 8.500h18M4 12.500h18M4 16.500h18M4 20.500h18M4 24.500h18" stroke="#2f93bb" strokeWidth="1.600" />
      </svg>
    ),
  },
  {
    label: "Genesis",
    icon: (
      <svg viewBox="0 0 30 30" className="size-[30px]">
        <path d="M27 1q0 7-7 8-9 0-12 9-1 7 4 7 5-1 7-5l-3-1 2-4 10-1-1 4q-3 11-15 12Q2 29 2 19 4 7 15 5q8-1 12-4z" fill="#e03424" stroke="#8c1a12" />
      </svg>
    ),
  },
  {
    label: "磁盘64",
    icon: (
      <svg viewBox="0 0 30 32" className="h-8 w-[30px]">
        <path d="M1 1h26l2 2v28H1z" fill="#2440c0" stroke="#101c60" />
        <path d="M10 1h13v10H10z" fill="#e4e8ee" />
        <path d="M18 2h3v7h-3z" fill="#2440c0" />
        <path d="M4 14h22v16H4z" fill="#fff" />
        <path d="M6 17h18M6 20.500h18M6 25h8" stroke="#c02828" />
        <text x="15" y="28.500" fontSize="8" fontWeight="bold" fill="#333">64</text>
      </svg>
    ),
  },
  {
    label: "P",
    icon: (
      <svg viewBox="0 0 30 30" className="size-[30px]">
        <path d="M1 28h3V1h18" fill="none" stroke="#0e8a48" />
        <path d="M10 10q4-4 9-3 9 0 10 6 0 7-5 8l-7 1v7H9l3-2v-5l-4-3 3-3-3-2z" fill="#12924c" />
        <path d="M8 16h4M8 19h4M8 22h4M9 25h4" stroke="#0c5c3a" />
      </svg>
    ),
  },
  {
    label: "飞鸟",
    icon: (
      <svg viewBox="0 0 28 28" className="size-7">
        <rect width="28" height="28" rx="6" fill="#1e96f8" />
        <path d="M8 4q13 4 13 11l-2 4h2l-7 7 1-5q-4-1-4-4l3 1q-4-3-5-7l4 2Q8 8 8 4z" fill="#fff" />
      </svg>
    ),
  },
  {
    label: "Word",
    icon: (
      <svg viewBox="0 0 30 30" className="size-[30px]">
        <path d="M1 24V8q1-7 8-7h15" fill="none" stroke="#7f9ed0" />
        <path d="M3 24V9q1-6 7-6h13v20z" fill="#d7e4f7" />
        <path d="M10 4l19 2-2 22-20-3z" fill="#fff" stroke="#9fb4d8" />
        <path d="M22 8h5M22 12h4M21 16h5M11 20l15 2M10 23l15 2" stroke="#2d57a8" strokeWidth="1.600" />
        <path d="M9 6l2 10 4-8 1 8 5-10" fill="none" stroke="#27509e" strokeWidth="2.400" />
      </svg>
    ),
  },
  {
    label: "Excel",
    active: true,
    stacked: true,
    icon: (
      <svg viewBox="0 0 32 30" className="h-[30px] w-8">
        <path d="M1 24V8q1-7 8-7h16v5" fill="#f0f6e8" stroke="#5b9440" />
        <path d="M1 25V8q1-5 7-5h13v20z" fill="#dcedc8" stroke="#6aa04c" />
        <path d="M12 6l19 2-3 21-22-3z" fill="#fff" stroke="#8ab070" />
        <path d="M23 10h6l-1 4h-5zM22 16h5l-1 4h-4zM21 22h5v4h-5zM15 21h4v4h-4zM9 20h4v4H9z" fill="#7cb95a" />
        <path d="M9 6l9 12M20 5L8 18" stroke="#2f6a1e" strokeWidth="3.200" />
      </svg>
    ),
  },
  { label: "查看器", icon: <DriveEye /> },
  {
    label: "X",
    stacked: true,
    icon: (
      <svg viewBox="0 0 32 30" className="h-[30px] w-8">
        <path d="M30 2L2 28" stroke="#fff" strokeWidth="3" />
        <path d="M30 2L2 28" stroke="#5c1060" />
        <path d="M1 2h8l21 26h-7z" fill="#8a1288" stroke="#fff" />
      </svg>
    ),
  },
  { label: "查看器二", icon: <DriveEye /> },
];

const Taskbar = () => (
  <div className="flex h-10 shrink-0 items-center border-t border-[#4c6a92] bg-[linear-gradient(90deg,#0b1f3c_0,#1a3a68_60px,#12305b_740px,#0a2b5c_1000px,#0b2d5f_1500px,#0b2040_1680px,#0c2344)] text-white">
    <button aria-label="开始菜单" className="w-[60px] pl-2">
      <svg viewBox="0 0 36 36" className="size-9">
        <defs>
          <radialGradient id="start" cx="50%" cy="80%" r="80%">
            <stop offset="0" stopColor="#58c4f0" />
            <stop offset=".6" stopColor="#2a6da8" />
            <stop offset="1" stopColor="#a8c8dd" />
          </radialGradient>
        </defs>
        <circle cx="18" cy="18" r="17" fill="url(#start)" stroke="#183c66" />
        <path d="M10 10q4-3 8-1l-2 8q-3-2-8 0z" fill="#ee6a2c" />
        <path d="M19 9.500q4 3 9 0l-2 8q-4 2-9 0z" fill="#8cc63c" />
        <path d="M8 18.500q4-2 8 0l-2 8q-3-2-8 0z" fill="#3f9ce6" />
        <path d="M17 19q4 2 9 0l-2 8q-5 2-9 0z" fill="#fbc52c" />
        <path d="M3 15a15 15 0 0 1 30 0q-15-5-30 0z" fill="#fff" opacity=".3" />
      </svg>
    </button>
    <div className="flex gap-1">
      {taskIcons.map((t) => (
        <div key={t.label} className="flex w-[58px]">
          <button
            aria-label={t.label}
            className={clsx(
              "flex h-[38px] flex-1 items-center justify-center rounded-[3px] border",
              t.active
                ? "border-[#c8d2e0] bg-gradient-to-b from-[#cfd8e4] to-[#8fa2bb]"
                : "border-[#6f87aa] bg-gradient-to-br from-[#7388a8] via-[#36527c] to-[#27446f]"
            )}
          >
            {t.icon}
          </button>
          {t.stacked && <span className="my-px w-[7px] rounded-r-[3px] border-y border-r-4 border-double border-[#6f87aa]" />}
        </div>
      ))}
    </div>
    <div className="ml-auto flex h-full items-center">
      <svg viewBox="0 0 16 14" className="h-3.5 w-4" fill="#d7dbe0" stroke="#555">
        <path d="M.5 5.500h15v8H.5z" />
        <path d="M2 8h12M2 10h12M4 12h8" strokeDasharray="1 1" />
        <path d="M5 5q0-3 4-3t6-2" fill="none" stroke="#bbb" />
      </svg>
      <HelpIcon className="ml-[7px] size-4" />
      <div className="ml-3.5 flex flex-col items-center gap-2">
        <svg viewBox="0 0 8 6" className="h-1.5 w-2 fill-none stroke-white">
          <path d="M2.500 2V.5h5v3H6M.5 2.500h5v3h-5z" />
        </svg>
        <Caret className="fill-white" />
      </div>
      <Caret className="ml-3 h-1 w-[7px] rotate-180 fill-white" />
      <svg viewBox="0 0 16 16" className="ml-3.5 size-4">
        <path d="M1.500 1v14" stroke="#fff" strokeWidth="1.5" />
        <path d="M3 2q3-1 5 1 2 1 4 0v6q-3 1-5-1-2-1-4 0z" fill="#fff" />
        <circle cx="10.5" cy="11" r="4.5" fill="#d8281c" />
        <path d="M8.500 9l4 4M12.500 9l-4 4" stroke="#fff" strokeWidth="1.5" />
      </svg>
      <svg viewBox="0 0 16 16" className="ml-2 size-4 fill-none stroke-white">
        <path d="M1 6h3l4-4v12l-4-4H1z" fill="#fff" />
        <path d="M10 5.500q2 2.500 0 5M12 3.500q3.500 4.500 0 9" />
      </svg>
      <svg viewBox="0 0 16 16" className="ml-2.5 size-4 fill-none stroke-white" strokeWidth="1.4">
        <path d="M5.500 3.500h9v7h-9M10 11v3M6 14.500h8M1 1v4h4V1M3 5v9h3" />
      </svg>
      <div className="w-20 pl-1 text-center font-['Noto_Sans',sans-serif] text-xs leading-[18px]">
        <div>19:18</div>
        <div>2023/5/9</div>
      </div>
      <button aria-label="显示桌面" className="h-full w-3.5 border border-[#6d7f99] bg-gradient-to-b from-[#53678a] to-[#14294b]" />
    </div>
  </div>
);

export default function App() {
  return (
    <div className="relative flex h-screen flex-col overflow-hidden bg-[#bfdbff] font-['Noto_Sans_CJK_SC',sans-serif] text-xs">
      <OfficeOrb />
      <TitleBar />
      <RibbonTabs />
      <Ribbon />
      <FormulaBar />
      <main className="flex min-h-0 flex-1">
        <div className="relative min-w-0 flex-1 overflow-hidden bg-white">
          <Sheet />
          <Pointers />
        </div>
        <VerticalScroll />
      </main>
      <SheetTabs />
      <StatusBar />
      <Taskbar />
    </div>
  );
}
